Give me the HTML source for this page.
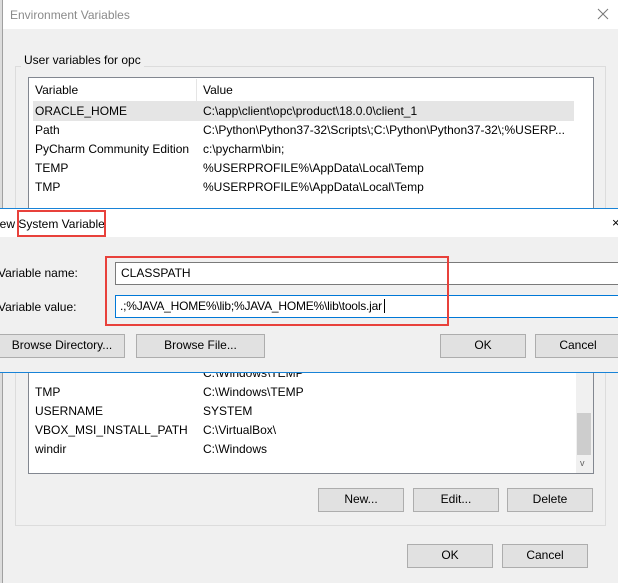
<!DOCTYPE html>
<html><head><style>
*{margin:0;padding:0;box-sizing:border-box}
body{width:618px;height:583px;overflow:hidden;position:relative;background:#f0f0f0;font-family:"Liberation Sans",sans-serif;font-size:12px;color:#000}
.a{position:absolute}
.t{position:absolute;white-space:nowrap;line-height:14px}
.btn{position:absolute;background:#e1e1e1;border:1px solid #adadad;text-align:center;line-height:21px}
</style></head><body>
<div class="a" style="left:0;top:0;width:3px;height:583px;background:#dcdcdc;border-right:1px solid #a0a0a0"></div>
<div class="a" style="left:3px;top:0;width:615px;height:29px;background:#fff"></div>
<div class="t" style="left:10px;top:8px;color:#8a8a8a;font-size:12px">Environment Variables</div>
<svg class="a" style="left:597px;top:8px" width="12" height="12"><path d="M1 1L11 11M11 1L1 11" stroke="#777" stroke-width="1"/></svg>
<div class="a" style="left:15px;top:66px;width:591px;height:460px;border:1px solid #dcdcdc"></div>
<div class="t" style="left:21px;top:53px;background:#f0f0f0;padding:0 3px">User variables for opc</div>
<div class="a" style="left:28px;top:77px;width:566px;height:135px;background:#fff;border:1px solid #828790"></div>
<div class="a" style="left:33px;top:101px;width:541px;height:20px;background:#e5e5e5"></div>
<div class="a" style="left:196px;top:79px;width:1px;height:22px;background:#e5e5e5"></div>
<div class="t" style="left:35px;top:83px">Variable</div><div class="t" style="left:203px;top:83px">Value</div>
<div class="t" style="left:35px;top:104px">ORACLE_HOME</div><div class="t" style="left:203px;top:104px">C:\app\client\opc\product\18.0.0\client_1</div>
<div class="t" style="left:35px;top:123px">Path</div><div class="t" style="left:203px;top:123px">C:\Python\Python37-32\Scripts\;C:\Python\Python37-32\;%USERP...</div>
<div class="t" style="left:35px;top:142px">PyCharm Community Edition</div><div class="t" style="left:203px;top:142px">c:\pycharm\bin;</div>
<div class="t" style="left:35px;top:161px">TEMP</div><div class="t" style="left:203px;top:161px">%USERPROFILE%\AppData\Local\Temp</div>
<div class="t" style="left:35px;top:180px">TMP</div><div class="t" style="left:203px;top:180px">%USERPROFILE%\AppData\Local\Temp</div>

<div class="a" style="left:28px;top:360px;width:566px;height:114px;background:#fff;border:1px solid #828790;border-top:none"></div>
<div class="a" style="left:576px;top:360px;width:17px;height:113px;background:#f0f0f0"></div>
<div class="a" style="left:577px;top:413px;width:14px;height:42px;background:#cdcdcd"></div>
<div class="t" style="left:580px;top:456px;font-size:9px;color:#606060">v</div>
<div class="t" style="left:203px;top:366px">C:\Windows\TEMP</div>
<div class="t" style="left:35px;top:385px">TMP</div><div class="t" style="left:203px;top:385px">C:\Windows\TEMP</div>
<div class="t" style="left:35px;top:404px">USERNAME</div><div class="t" style="left:203px;top:404px">SYSTEM</div>
<div class="t" style="left:35px;top:423px">VBOX_MSI_INSTALL_PATH</div><div class="t" style="left:203px;top:423px">C:\VirtualBox\</div>
<div class="t" style="left:35px;top:442px">windir</div><div class="t" style="left:203px;top:442px">C:\Windows</div>
<div class="btn" style="left:318px;top:488px;width:86px;height:24px">New...</div>
<div class="btn" style="left:413px;top:488px;width:86px;height:24px">Edit...</div>
<div class="btn" style="left:507px;top:488px;width:86px;height:24px">Delete</div>
<div class="btn" style="left:407px;top:544px;width:86px;height:24px">OK</div>
<div class="btn" style="left:502px;top:544px;width:86px;height:24px">Cancel</div>

<!-- dialog -->
<div class="a" style="left:0;top:208px;width:618px;height:165px;background:#f0f0f0;border-top:1px solid #1883d7;border-bottom:1px solid #1883d7"></div>
<div class="a" style="left:0;top:209px;width:618px;height:28px;background:#fff"></div>
<div class="t" style="left:-9px;top:217px">New System Variable</div>
<div class="t" style="left:612px;top:216px;font-size:13px">×</div>
<div class="a" style="left:17px;top:210px;width:89px;height:27px;border:2px solid #e8413b"></div>
<div class="t" style="left:-2px;top:266px">Variable name:</div>
<div class="t" style="left:-2px;top:300px">Variable value:</div>
<div class="a" style="left:115px;top:262px;width:510px;height:23px;background:#fff;border:1px solid #7a7a7a"></div>
<div class="t" style="left:121px;top:266px">CLASSPATH</div>
<div class="a" style="left:115px;top:295px;width:510px;height:23px;background:#fff;border:1px solid #0078d7"></div>
<div class="t" style="left:120px;top:299px;letter-spacing:-0.2px">.;%JAVA_HOME%\lib;%JAVA_HOME%\lib\tools.jar</div>
<div class="a" style="left:384px;top:299px;width:1px;height:14px;background:#000"></div>
<div class="a" style="left:105px;top:256px;width:344px;height:70px;border:2px solid #e8413b"></div>
<div class="btn" style="left:-1px;top:334px;width:126px;height:24px">Browse Directory...</div>
<div class="btn" style="left:136px;top:334px;width:129px;height:24px">Browse File...</div>
<div class="btn" style="left:440px;top:334px;width:86px;height:24px">OK</div>
<div class="btn" style="left:535px;top:334px;width:86px;height:24px">Cancel</div>
</body></html>
